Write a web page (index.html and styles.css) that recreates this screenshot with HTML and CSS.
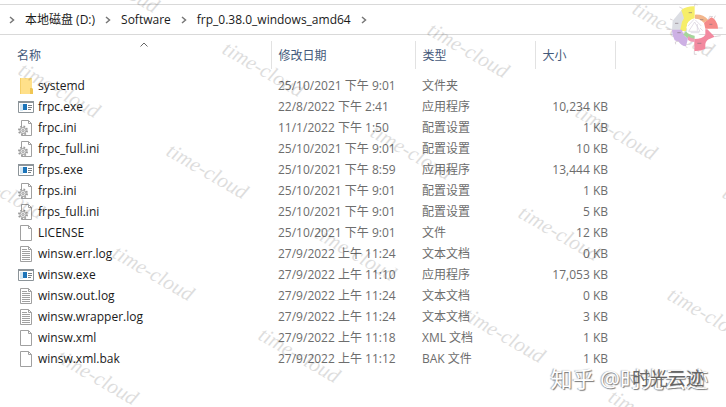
FILE: index.html
```html
<!DOCTYPE html>
<html lang="zh-CN">

<head>
    <meta charset="utf-8">
    <title>frp_0.38.0_windows_amd64</title>
    <link rel="stylesheet" href="styles.css">
</head>

<body>
    <svg class="symbols" aria-hidden="true">
        <symbol id="chevron" viewBox="0 0 6 8">
            <path d="M1 1l3.500 3L1 7" fill="none" stroke="#777" stroke-width="1.500" />
        </symbol>
        <symbol id="folder" viewBox="0 0 16 16">
            <path d="M2 0h12v15l-1 1H2z" fill="#ffe08a" />
            <path d="M12 10h2l1 1v5h-3z" fill="#f0c653" />
            <path d="M2 0h1v16H2z" fill="#f5cf68" />
        </symbol>
        <symbol id="exe" viewBox="0 0 16 16">
            <path d="M.5 2.500h15v11H.5z" fill="#fff" stroke="#8c9499" />
            <path d="M0 2h16v2H0z" fill="#8c9499" />
            <path d="M2 5h3v7H2z" fill="#d4e8f5" />
            <path d="M5 5h4v6H5z" fill="#1c74b9" />
            <path d="M10 6.500h4M10 8.500h4M10 10.500h3" stroke="#777f85" />
        </symbol>
        <symbol id="file" viewBox="0 0 16 16">
            <path d="M2.500.5h8l3 3v12h-11z" fill="#fff" stroke="#a0a0a0" />
            <path d="M10.500.5v3h3" fill="none" stroke="#a0a0a0" />
        </symbol>
        <symbol id="log" viewBox="0 0 16 16">
            <path d="M2.500.5h8l3 3v12h-11z" fill="#fff" stroke="#a0a0a0" />
            <path d="M10.500.5v3h3M4 3.500h5M4 5.500h8M4 7.500h8M4 9.500h8M4 11.500h8M4 13.500h8" fill="none" stroke="#a0a0a0" />
        </symbol>
        <symbol id="ini" viewBox="0 0 16 16">
            <path d="M3.500.5h7l3 3v12h-10z" fill="#fff" stroke="#a0a0a0" />
            <path d="M10.500.5v3h3" fill="none" stroke="#a0a0a0" />
            <circle cx="5" cy="10.500" r="4" fill="#f0f0f0" stroke="#9a9a9a" stroke-width="2" stroke-dasharray="1.600 1.540" />
            <circle cx="5" cy="10.500" r="3" fill="#ececec" stroke="#a4a4a4" />
            <circle cx="5" cy="10.500" r="1" fill="#fff" stroke="#999" />
        </symbol>
    </svg>

    <nav class="breadcrumb" aria-label="路径">
        <svg class="chevron"><use href="#chevron" /></svg>
        <a href="#">本地磁盘 (D:)</a>
        <svg class="chevron"><use href="#chevron" /></svg>
        <a href="#">Software</a>
        <svg class="chevron"><use href="#chevron" /></svg>
        <a href="#">frp_0.38.0_windows_amd64</a>
        <svg class="chevron"><use href="#chevron" /></svg>
    </nav>

    <table class="files">
        <colgroup>
            <col class="col-name">
            <col class="col-date">
            <col class="col-type">
            <col class="col-size">
        </colgroup>
        <thead>
            <tr>
                <th aria-sort="ascending">
                    <button type="button">名称</button>
                    <svg class="sort" viewBox="0 0 8 5"><path d="M.5 4.500L4 1l3.500 3.500" fill="none" stroke="#666" /></svg>
                </th>
                <th><button type="button">修改日期</button></th>
                <th><button type="button">类型</button></th>
                <th><button type="button">大小</button></th>
            </tr>
        </thead>
        <tbody id="file-list"></tbody>
    </table>

    <svg class="watermark" id="watermark" aria-hidden="true"></svg>

    <svg class="wheel" viewBox="0 0 198 180" aria-hidden="true">
        <path d="M68 26L38 62l-2 28 30 2 8-34z" fill="#dcdee4" />
        <path d="M64 30q16-12 40-11v36q-16 4-22 16l-4 22H60l6-28 6-10z" fill="#f6ee6a" />
        <path d="M105 44q24-2 40 16l-14 8q-10-12-26-12z" fill="#f3b68c" />
        <path d="M132 68l22-16 8 4q12 14 12 30h-38z" fill="#f58a88" />
        <path d="M136 88h6l22 22-14 6q-12 4-14 16v14q-14 8-33 7v-36q24 0 33-13z" fill="#f2899f" />
        <path d="M36 89h30q2 16 18 26l-6 24q-14-2-22-14l-12-4q-8-14-8-32z" fill="#cdb0e4" />
        <path d="M78 94q8 12 26 12v10q-18 4-34-12z" fill="#a5d59b" />
        <path d="M84 108q8 8 20 8v10q-14 0-20-6z" fill="#f09ab5" />
        <circle cx="105" cy="82" r="25" fill="#fff" />
        <path d="M84 78l18-20M86 94l18-28 16 28zM106 60l18 18M112 72v20M120 84l8 8M92 98h26" fill="none" stroke="#d5cddb" stroke-width="2" />
        <path d="M68 26l-10-5M104 19v-7l9 3M145 60l4-11 10 1M162 56l4-9M174 84h14M164 110l18-3M136 145l20-1M103 153v10h7M58 122l-12 4 1 7M78 139l4 5M36 88H20M38 60l-8-3" fill="none" stroke="#c9bfc4" stroke-width="2" />
        <path d="M86 38h10M45 70h10M52 98h10M120 59h10M148 73h9M112 130h12" stroke="#837079" stroke-width="3" opacity=".6" />
    </svg>

    <div class="source-mark" aria-hidden="true">
        <span>知乎 @时光云迹</span>
        <span class="source-name">时光云迹</span>
    </div>

    <script>
        const files = [
            ['folder', 'systemd', '25/10/2021 下午 9:01', '文件夹', ''],
            ['exe', 'frpc.exe', '22/8/2022 下午 2:41', '应用程序', '10,234 KB'],
            ['ini', 'frpc.ini', '11/1/2022 下午 1:50', '配置设置', '1 KB'],
            ['ini', 'frpc_full.ini', '25/10/2021 下午 9:01', '配置设置', '10 KB'],
            ['exe', 'frps.exe', '25/10/2021 下午 8:59', '应用程序', '13,444 KB'],
            ['ini', 'frps.ini', '25/10/2021 下午 9:01', '配置设置', '1 KB'],
            ['ini', 'frps_full.ini', '25/10/2021 下午 9:01', '配置设置', '5 KB'],
            ['file', 'LICENSE', '25/10/2021 下午 9:01', '文件', '12 KB'],
            ['log', 'winsw.err.log', '27/9/2022 上午 11:24', '文本文档', '0 KB'],
            ['exe', 'winsw.exe', '27/9/2022 上午 11:10', '应用程序', '17,053 KB'],
            ['log', 'winsw.out.log', '27/9/2022 上午 11:24', '文本文档', '0 KB'],
            ['log', 'winsw.wrapper.log', '27/9/2022 上午 11:24', '文本文档', '3 KB'],
            ['file', 'winsw.xml', '27/9/2022 上午 11:18', 'XML 文档', '1 KB'],
            ['file', 'winsw.xml.bak', '27/9/2022 上午 11:12', 'BAK 文件', '1 KB']
        ];

        document.getElementById('file-list').innerHTML = files.map(([icon, name, date, type, size]) => `
            <tr>
                <td><div class="file-name"><svg class="icon"><use href="#${icon}" /></svg>${name}</div></td>
                <td>${date}</td>
                <td>${type}</td>
                <td class="size">${size}</td>
            </tr>`).join('');

        // centre of each repeated mark
        const marks = [
            [118, -14], [263, 70], [468, 51], [673, 30], [59, 91], [207, 172],
            [411, 153], [616, 133], [3, 192], [153, 274], [355, 254], [559, 234],
            [763, 214], [97, 378], [299, 356], [504, 336], [708, 316], [649, 418]
        ];

        document.getElementById('watermark').innerHTML = marks.map(([x, y]) =>
            `<text transform="translate(${x} ${y}) rotate(30)" text-anchor="middle" dy="6">time-cloud</text>`
        ).join('');
    </script>
</body>

</html>
```
FILE: styles.css
```css
* {
    box-sizing: border-box;
}

body {
    position: relative;
    min-height: 100vh;
    margin: 0;
    padding-top: 4px;
    overflow: hidden;
    background-color: #fff;
    color: #1a1a1a;
    font-family: "Open Sans", "Noto Sans CJK SC", sans-serif;
    font-size: 12px;
    line-height: 20px;
}

.symbols {
    position: absolute;
    width: 0;
    height: 0;
}

.breadcrumb {
    display: flex;
    align-items: center;
    gap: 10px;
    height: 31px;
    padding-left: 9px;
    border-top: 1px solid #d9d9d9;
    border-bottom: 1px solid #d9d9d9;
}

.breadcrumb a {
    color: #1a1a1a;
    text-decoration: none;
    white-space: nowrap;
}

.chevron {
    flex: none;
    width: 6px;
    height: 8px;
}

.files {
    margin: 6px 0 0 10px;
    border-collapse: collapse;
    table-layout: fixed;
    width: 605px;
}

.col-name {
    width: 261px;
}

.col-date {
    width: 144px;
}

.col-type {
    width: 120px;
}

.col-size {
    width: 80px;
}

.files th {
    position: relative;
    height: 28px;
    padding: 2px 7px 0;
    border-right: 1px solid #e2e2e2;
    text-align: left;
}

.files th button {
    padding: 0;
    border: none;
    background: none;
    color: #44597a;
    font: inherit;
    font-weight: normal;
    cursor: pointer;
}

.sort {
    position: absolute;
    top: 1px;
    left: 50%;
    width: 8px;
    height: 5px;
}

.files tbody::before {
    content: "";
    display: block;
    height: 6px;
}

.files td {
    height: 21px;
    padding: 0 7px;
    color: #6d6d6d;
    white-space: nowrap;
}

.files .size {
    text-align: right;
}

.file-name {
    display: flex;
    align-items: center;
    gap: 4px;
    padding-left: 1px;
    color: #1a1a1a;
}

.icon {
    flex: none;
    width: 16px;
    height: 16px;
}

.watermark {
    position: absolute;
    top: 0;
    left: 0;
    width: 100%;
    height: 100%;
    pointer-events: none;
    fill: #000;
    opacity: 0.13;
    font-family: "Liberation Serif", serif;
    font-size: 21px;
    font-style: italic;
}

.wheel {
    position: absolute;
    top: 0;
    right: 0;
    width: 66px;
    height: 60px;
}

.source-mark {
    position: absolute;
    right: 18px;
    bottom: 15px;
    color: #fff;
    font-size: 22px;
    line-height: 28px;
    white-space: nowrap;
    text-shadow: 1px 1px 1px #777, -1px 0 1px #aaa;
}

.source-name {
    position: absolute;
    top: 0;
    right: 4px;
    color: #666;
    font-size: 18px;
    text-shadow: none;
}
```
